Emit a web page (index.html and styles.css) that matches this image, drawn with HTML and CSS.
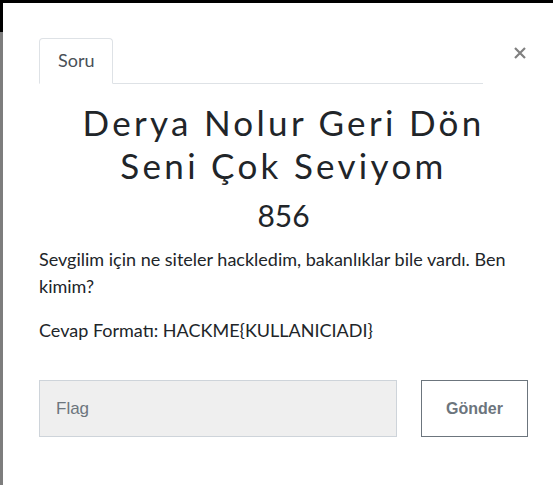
FILE: index.html
```html
<!DOCTYPE html>
<html lang="tr">
<head>
<meta charset="utf-8">
<title>Soru</title>
<link rel="stylesheet" href="styles.css">
</head>
<body>
<div class="screen">
  <div class="topbar"></div>
  <div class="stage">
    <div class="strip"></div>
    <div class="modal">
      <div class="modal-head">
        <ul class="tabs">
          <li class="tab">Soru</li>
        </ul>
        <button class="close" type="button" aria-label="Kapat">
          <svg width="12" height="12" viewBox="0 0 12 12"><path d="M1 1 L11 11 M11 1 L1 11" stroke="#808080" stroke-width="2.2" stroke-linecap="butt"/></svg>
        </button>
      </div>
      <div class="modal-body">
        <h3 class="title">Derya Nolur Geri Dön<br>Seni Çok Seviyom</h3>
        <h4 class="value">856</h4>
        <p class="desc">Sevgilim için ne siteler hackledim, bakanlıklar bile vardı. Ben kimim?</p>
        <p class="desc">Cevap Formatı: HACKME{KULLANICIADI}</p>
        <form class="submit-row">
          <input class="flag" type="text" placeholder="Flag">
          <button class="send" type="button">Gönder</button>
        </form>
      </div>
    </div>
  </div>
</div>
</body>
</html>
```

FILE: styles.css
```css
* { box-sizing: border-box; }
html, body { margin: 0; padding: 0; }
body {
  background: #000;
  font-family: "Lato", "Liberation Sans", sans-serif;
  color: #212529;
}
.screen {
  width: 553px;
  height: 485px;
  display: flex;
  flex-direction: column;
  overflow: hidden;
}
.topbar {
  height: 3px;
  background: #000;
  flex: none;
}
.stage {
  flex: 1;
  display: flex;
}
.strip {
  width: 3px;
  flex: none;
  background: linear-gradient(#000 0, #000 29px, #7d7d7d 29px, #7d7d7d 100%);
}
.modal {
  flex: 1;
  background: #fff;
}
.modal-head {
  display: flex;
  padding: 35px 27px 0 36px;
}
.tabs {
  flex: 1;
  list-style: none;
  margin: 0;
  padding: 0;
  display: flex;
  border-bottom: 1px solid #dee2e6;
}
.tab {
  margin-bottom: -1px;
  border: 1px solid #dee2e6;
  border-bottom-color: #fff;
  border-radius: 4px 4px 0 0;
  padding: 8px 17px 9px 18px;
  font-size: 18px;
  line-height: 27px;
  color: #495057;
}
.close {
  flex: none;
  width: 12px;
  height: 12px;
  margin: 9px 0 0 31px;
  padding: 0;
  border: 0;
  background: none;
  display: flex;
}
.modal-body {
  padding: 17px 25px 0 36px;
}
.title {
  margin: 0 0 10px;
  text-align: center;
  font-weight: 400;
  font-size: 35px;
  line-height: 43px;
  letter-spacing: 3.3px;
  color: #212529;
}
.value {
  margin: 0 0 13px;
  text-align: center;
  font-weight: 400;
  font-size: 30px;
  line-height: 36px;
  color: #212529;
}
.desc {
  margin: 0 0 17px;
  font-size: 18px;
  line-height: 27px;
}
.submit-row {
  margin: 36px 0 0;
  display: flex;
  gap: 24px;
}
.flag {
  flex: 1;
  min-width: 0;
  height: 57px;
  border: 1px solid #ced4da;
  background: #efefef;
  padding: 0 16px;
  font-family: "Liberation Sans", Arial, sans-serif;
  font-size: 17px;
  color: #495057;
  outline: none;
}
.flag::placeholder { color: #6c757d; }
.send {
  width: 107px;
  height: 57px;
  border: 1px solid #6c757d;
  background: #fff;
  color: #6c757d;
  font-family: "Liberation Sans", Arial, sans-serif;
  font-weight: 700;
  font-size: 16px;
  padding: 0;
}
```
